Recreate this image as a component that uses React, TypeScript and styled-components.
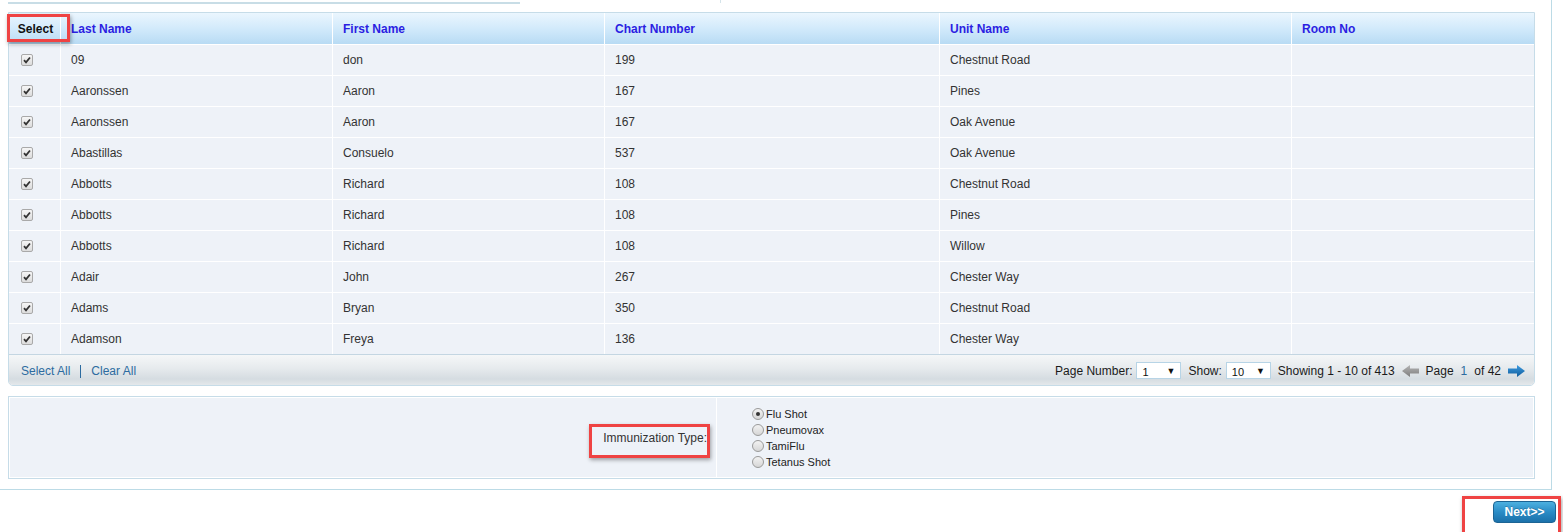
import React from 'react';
import styled, { createGlobalStyle } from 'styled-components';

const GlobalStyle = createGlobalStyle`
	html, body {
		margin: 0;
		padding: 0;
		background: #fff;
	}
	body {
		font-family: "Liberation Sans", Arial, sans-serif;
		font-size: 12px;
		color: #333;
	}
`;

interface IRow {
	lastName: string;
	firstName: string;
	chart: string;
	unit: string;
	room: string;
}

const rows: IRow[] = [
	{ lastName: '09', firstName: 'don', chart: '199', unit: 'Chestnut Road', room: '' },
	{ lastName: 'Aaronssen', firstName: 'Aaron', chart: '167', unit: 'Pines', room: '' },
	{ lastName: 'Aaronssen', firstName: 'Aaron', chart: '167', unit: 'Oak Avenue', room: '' },
	{ lastName: 'Abastillas', firstName: 'Consuelo', chart: '537', unit: 'Oak Avenue', room: '' },
	{ lastName: 'Abbotts', firstName: 'Richard', chart: '108', unit: 'Chestnut Road', room: '' },
	{ lastName: 'Abbotts', firstName: 'Richard', chart: '108', unit: 'Pines', room: '' },
	{ lastName: 'Abbotts', firstName: 'Richard', chart: '108', unit: 'Willow', room: '' },
	{ lastName: 'Adair', firstName: 'John', chart: '267', unit: 'Chester Way', room: '' },
	{ lastName: 'Adams', firstName: 'Bryan', chart: '350', unit: 'Chestnut Road', room: '' },
	{ lastName: 'Adamson', firstName: 'Freya', chart: '136', unit: 'Chester Way', room: '' },
];

const immunizations = ['Flu Shot', 'Pneumovax', 'TamiFlu', 'Tetanus Shot'];

const COLS = '51px 272px 272px 335px 352px 1fr';

const Page = styled.div`
	position: relative;
	width: 1563px;
	height: 532px;
	overflow: hidden;
`;

const Panel = styled.div`
	width: 1551px;
	border-right: 1px solid #bcdbe6;
	border-bottom: 1px solid #bcdbe6;
	padding-bottom: 10px;
`;

const TopStrip = styled.div`
	display: flex;
	align-items: flex-start;
	height: 12px;
	padding-left: 8px;
`;

const TopInput = styled.div`
	width: 512px;
	height: 1px;
	margin-top: 1px;
	border-bottom: 2px solid #c8dde6;
`;

const TopTick = styled.div`
	width: 1px;
	height: 3px;
	margin-left: 200px;
	background: #d5e4ea;
`;

const Grid = styled.div`
	margin-left: 8px;
	width: 1525px;
	border: 1px solid #c6dce8;
	border-radius: 0 0 5px 5px;
	overflow: hidden;
`;

const HeaderRow = styled.div`
	display: grid;
	grid-template-columns: ${COLS};
	height: 31px;
	background: linear-gradient(to bottom, #ebf6fe 0%, #d2eafb 50%, #b8dbf4 100%);
`;

const HeaderCell = styled.div<{ $plain?: boolean; $center?: boolean }>`
	display: flex;
	align-items: center;
	justify-content: ${p => (p.$center ? 'center' : 'flex-start')};
	padding-left: ${p => (p.$center ? '2px' : '10px')};
	border-left: 1px solid #fff;
	font-weight: bold;
	font-size: 12px;
	color: ${p => (p.$plain ? '#111' : '#2b1ee2')};

	&:first-child {
		border-left: none;
	}
`;

const DataRow = styled.div`
	display: grid;
	grid-template-columns: ${COLS};
	height: 30px;
	background: #eef2f8;
	border-top: 1px solid #fff;
`;

const DataCell = styled.div<{ $check?: boolean }>`
	display: flex;
	align-items: center;
	padding-left: ${p => (p.$check ? '12px' : '10px')};
	border-left: 1px solid #fff;
	font-size: 12px;
	color: #333;

	&:first-child {
		border-left: none;
	}
`;

const CheckBox = styled.span`
	display: inline-flex;
	align-items: center;
	justify-content: center;
	width: 10px;
	height: 10px;
	border: 1px solid #a9a9a9;
	border-radius: 2px;
	background: linear-gradient(to bottom, #f6f6f6, #dcdcdc);
`;

const Footer = styled.div`
	display: flex;
	align-items: center;
	justify-content: space-between;
	height: 30px;
	border-top: 1px solid #c4d6e2;
	padding: 0 6px 0 12px;
	background: linear-gradient(to bottom, #f5f7f8 0%, #e6eaed 45%, #d5dce1 80%, #e4e8eb 100%);
`;

const LinkGroup = styled.div`
	display: flex;
	align-items: center;
	padding-top: 2px;
`;

const FooterLink = styled.span`
	color: #2c6ba0;
	font-size: 12px;
`;

const LinkDivider = styled.span`
	width: 1px;
	height: 13px;
	margin: 0 10px;
	background: #2c6ba0;
`;

const Pager = styled.div`
	display: flex;
	align-items: center;
	gap: 4px;
	font-size: 12px;
	color: #1a1a1a;
	padding-top: 1px;
`;

const SelectBox = styled.div<{ $width: number }>`
	display: flex;
	align-items: center;
	justify-content: space-between;
	width: ${p => p.$width}px;
	height: 17px;
	box-sizing: border-box;
	border: 1px solid #b7d4e6;
	background: #fff;
	padding: 2px 5px 0 5px;
	font-size: 11px;
	color: #111;
	margin-right: 3px;

	&::after {
		content: '▼';
		font-size: 9px;
		color: #111;
		margin-top: -2px;
	}
`;

const PageNo = styled.span`
	color: #2c6ba0;
	margin: 0 3px;
`;

const ImmunBox = styled.div`
	display: grid;
	grid-template-columns: 708px 1fr;
	margin: 10px 0 0 8px;
	width: 1525px;
	height: 81px;
	border: 1px solid #c6dce8;
	background: #eef2f8;
	box-shadow: inset 0 0 0 1px #fff;
`;

const LabelCell = styled.div`
	display: flex;
	align-items: center;
	justify-content: flex-end;
	padding-right: 9px;
	padding-top: 1px;
	border-right: 1px solid #fff;
	font-size: 12px;
	color: #333;
`;

const RadioList = styled.div`
	display: flex;
	flex-direction: column;
	justify-content: center;
	padding-left: 35px;
`;

const RadioItem = styled.label`
	display: flex;
	align-items: center;
	height: 16px;
	font-size: 11px;
	color: #222;
`;

const RadioDot = styled.span<{ $checked?: boolean }>`
	display: inline-flex;
	align-items: center;
	justify-content: center;
	width: 10px;
	height: 10px;
	margin-right: 2px;
	border: 1px solid #9a9a9a;
	border-radius: 50%;
	background: linear-gradient(to bottom, #f2f2f2, #d6d6d6);

	&::after {
		content: '';
		display: ${p => (p.$checked ? 'block' : 'none')};
		width: 4px;
		height: 4px;
		border-radius: 50%;
		background: #333;
	}
`;

const ButtonRow = styled.div`
	display: flex;
	justify-content: flex-end;
	padding: 11px 7px 0 0;
`;

const NextButton = styled.button`
	width: 63px;
	height: 22px;
	border: 1px solid #1c6494;
	border-radius: 4px;
	background: linear-gradient(to bottom, #4cb0e0 0%, #2a8cc6 50%, #1b71aa 100%);
	color: #fff;
	font-family: "Liberation Sans", Arial, sans-serif;
	font-size: 12px;
	font-weight: bold;
	padding: 0;
	text-shadow: 0 -1px 0 rgba(0, 0, 0, 0.2);
`;

const Callout = styled.div<{ $x: number; $y: number; $w: number; $h: number }>`
	position: absolute;
	left: ${p => p.$x}px;
	top: ${p => p.$y}px;
	width: ${p => p.$w}px;
	height: ${p => p.$h}px;
	box-sizing: border-box;
	border: 3px solid #ef4343;
	box-shadow: 1px 2px 4px rgba(0, 0, 0, 0.35);
	pointer-events: none;
`;

const CheckMark = () => (
	<svg
		width="8"
		height="8"
		viewBox="0 0 8 8"
	>
		<path
			d="M1 4.2 L3 6.3 L7 1.5"
			fill="none"
			stroke="#333"
			strokeWidth="1.8"
		/>
	</svg>
);

const Arrow = ({ dir, color, dark }: { dir: 'left' | 'right'; color: string; dark: string }) => (
	<svg
		width="17"
		height="12"
		viewBox="0 0 17 12"
		style={{ margin: '0 3px', transform: dir === 'left' ? 'scaleX(-1)' : undefined }}
	>
		<defs>
			<linearGradient
				id={`ar-${dir}`}
				x1="0"
				y1="0"
				x2="0"
				y2="1"
			>
				<stop
					offset="0"
					stopColor={color}
				/>
				<stop
					offset="1"
					stopColor={dark}
				/>
			</linearGradient>
		</defs>
		<path
			d="M0 3.5 H9 V0 L17 6 L9 12 V8.5 H0 Z"
			fill={`url(#ar-${dir})`}
		/>
	</svg>
);

const App = () => {
	return (
		<Page>
			<GlobalStyle />
			<Panel>
				<TopStrip>
					<TopInput />
					<TopTick />
				</TopStrip>
				<Grid>
					<HeaderRow>
						<HeaderCell
							$plain
							$center
						>
							Select
						</HeaderCell>
						<HeaderCell>Last Name</HeaderCell>
						<HeaderCell>First Name</HeaderCell>
						<HeaderCell>Chart Number</HeaderCell>
						<HeaderCell>Unit Name</HeaderCell>
						<HeaderCell>Room No</HeaderCell>
					</HeaderRow>
					{rows.map((row, i) => (
						<DataRow key={i}>
							<DataCell $check>
								<CheckBox>
									<CheckMark />
								</CheckBox>
							</DataCell>
							<DataCell>{row.lastName}</DataCell>
							<DataCell>{row.firstName}</DataCell>
							<DataCell>{row.chart}</DataCell>
							<DataCell>{row.unit}</DataCell>
							<DataCell>{row.room}</DataCell>
						</DataRow>
					))}
					<Footer>
						<LinkGroup>
							<FooterLink>Select All</FooterLink>
							<LinkDivider />
							<FooterLink>Clear All</FooterLink>
						</LinkGroup>
						<Pager>
							<span>Page Number:</span>
							<SelectBox $width={45}>1</SelectBox>
							<span>Show:</span>
							<SelectBox $width={45}>10</SelectBox>
							<span>Showing 1 - 10 of 413</span>
							<Arrow
								dir="left"
								color="#b5b5b5"
								dark="#7d7d7d"
							/>
							<span>Page</span>
							<PageNo>1</PageNo>
							<span>of 42</span>
							<Arrow
								dir="right"
								color="#3d9be0"
								dark="#0f5c9c"
							/>
						</Pager>
					</Footer>
				</Grid>
				<ImmunBox>
					<LabelCell>Immunization Type:</LabelCell>
					<RadioList>
						{immunizations.map((name, i) => (
							<RadioItem key={name}>
								<RadioDot $checked={i === 0} />
								{name}
							</RadioItem>
						))}
					</RadioList>
				</ImmunBox>
			</Panel>
			<ButtonRow>
				<NextButton>Next&gt;&gt;</NextButton>
			</ButtonRow>
			<Callout
				$x={7}
				$y={14}
				$w={63}
				$h={28}
			/>
			<Callout
				$x={589}
				$y={424}
				$w={121}
				$h={34}
			/>
			<Callout
				$x={1462}
				$y={496}
				$w={99}
				$h={40}
			/>
		</Page>
	);
};

export default App;
